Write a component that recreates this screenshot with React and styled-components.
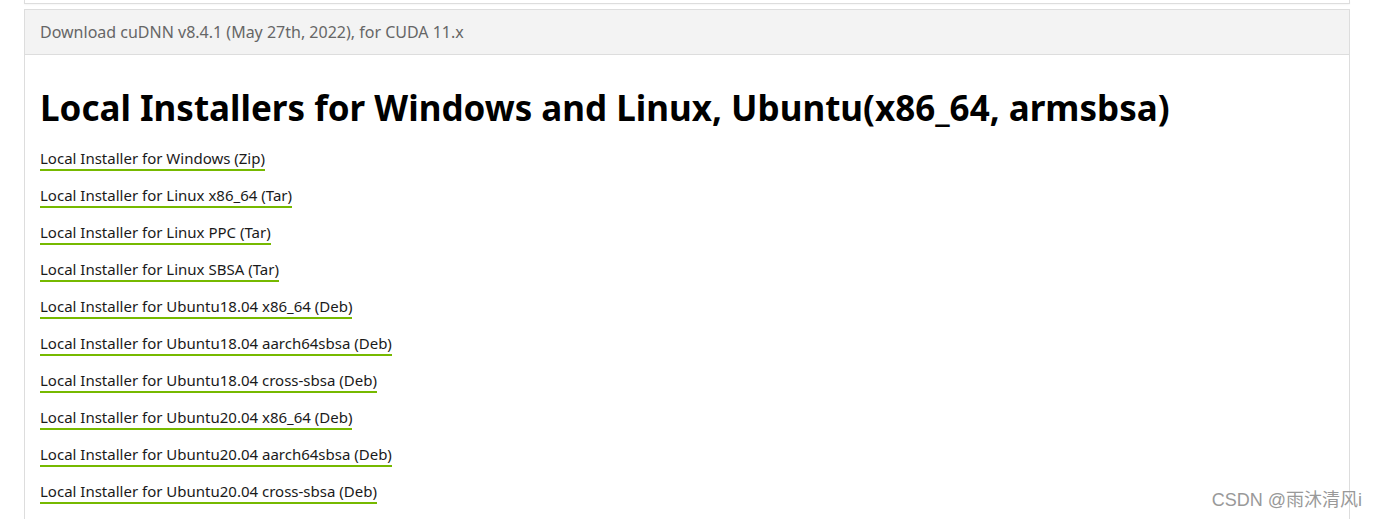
import React from 'react';
import styled, { createGlobalStyle } from 'styled-components';

const GlobalStyle = createGlobalStyle`
  html, body {
    margin: 0;
    padding: 0;
    background: #fff;
    font-family: "Noto Sans", "Liberation Sans", sans-serif;
    overflow: hidden;
  }
`;

const Page = styled.div`
  position: relative;
  width: 1377px;
  height: 519px;
  padding: 0 27px 0 24px;
  box-sizing: border-box;
`;

const PrevPanel = styled.div`
  height: 3px;
  border: 1px solid #ddd;
  border-top: none;
  box-shadow: 0 1px 2px rgba(0, 0, 0, 0.04);
`;

const Panel = styled.div`
  margin-top: 5px;
  border: 1px solid #ddd;
  border-bottom: none;
  height: 520px;
`;

const PanelHeader = styled.div`
  background: #f3f3f3;
  border-bottom: 1px solid #ddd;
  height: 44px;
  display: flex;
  align-items: center;
  padding: 0 15px;
  font-size: 16px;
  color: #666;
`;

const PanelBody = styled.div`
  padding: 29px 15px 0;
`;

const Heading = styled.h1`
  margin: 0 0 15px;
  font-size: 35px;
  font-weight: 700;
  color: #000;
  line-height: 48px;
`;

const LinkList = styled.ul`
  list-style: none;
  margin: 0;
  padding: 0;
  display: flex;
  flex-direction: column;
  gap: 13px;
`;

const LinkItem = styled.li`
  line-height: 22px;
`;

const Link = styled.a`
  display: inline-block;
  font-size: 15px;
  line-height: 21px;
  color: #1a1a1a;
  text-decoration: none;
  border-bottom: 2px solid #76b900;
`;

const Watermark = styled.div`
  position: absolute;
  right: 15px;
  bottom: 8px;
  font-size: 18px;
  color: #999;
  font-family: "Liberation Sans", "Noto Sans CJK SC", sans-serif;
`;

const links = [
  'Local Installer for Windows (Zip)',
  'Local Installer for Linux x86_64 (Tar)',
  'Local Installer for Linux PPC (Tar)',
  'Local Installer for Linux SBSA (Tar)',
  'Local Installer for Ubuntu18.04 x86_64 (Deb)',
  'Local Installer for Ubuntu18.04 aarch64sbsa (Deb)',
  'Local Installer for Ubuntu18.04 cross-sbsa (Deb)',
  'Local Installer for Ubuntu20.04 x86_64 (Deb)',
  'Local Installer for Ubuntu20.04 aarch64sbsa (Deb)',
  'Local Installer for Ubuntu20.04 cross-sbsa (Deb)',
];

export default function App() {
  return (
    <Page>
      <GlobalStyle />
      <PrevPanel />
      <Panel>
        <PanelHeader>Download cuDNN v8.4.1 (May 27th, 2022), for CUDA 11.x</PanelHeader>
        <PanelBody>
          <Heading>Local Installers for Windows and Linux, Ubuntu(x86_64, armsbsa)</Heading>
          <LinkList>
            {links.map((l) => (
              <LinkItem key={l}>
                <Link href="#">{l}</Link>
              </LinkItem>
            ))}
          </LinkList>
        </PanelBody>
      </Panel>
      <Watermark>CSDN @雨沐清风i</Watermark>
    </Page>
  );
}
